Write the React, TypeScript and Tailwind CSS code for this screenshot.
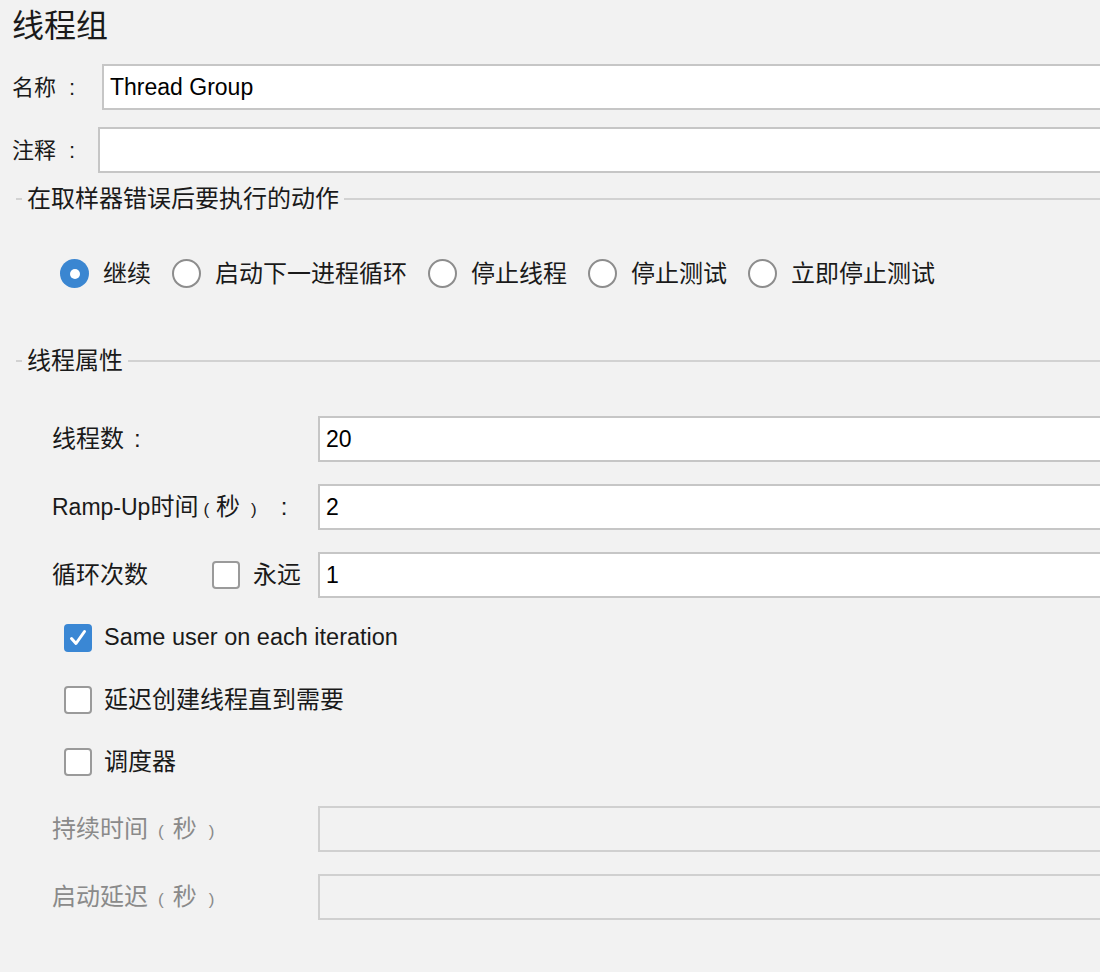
import React from "react";

const font = { fontFamily: '"Liberation Sans", "Noto Sans CJK SC", sans-serif' };

function SectionHeader({ title }: { title: string }) {
  return (
    <div className="flex items-center h-[52px] pl-[16px]">
      <div className="w-[6px] h-[2px] bg-[#d2d2d2]" />
      <span className="mx-[5px] text-[24px] text-[#1a1a1a] leading-none">{title}</span>
      <div className="flex-1 h-[2px] bg-[#d2d2d2]" />
    </div>
  );
}

function Radio({ checked, label }: { checked?: boolean; label: string }) {
  return (
    <div className="flex items-center mr-[21px]">
      {checked ? (
        <div className="w-[29px] h-[29px] rounded-full bg-[#3a86d1] flex items-center justify-center">
          <div className="w-[10px] h-[10px] rounded-full bg-white" />
        </div>
      ) : (
        <div className="w-[29px] h-[29px] rounded-full bg-white border-2 border-[#8d8d8d]" />
      )}
      <span className="ml-[14px] text-[24px] text-[#1a1a1a] leading-none">{label}</span>
    </div>
  );
}

function Checkbox({ checked }: { checked?: boolean }) {
  if (checked) {
    return (
      <div className="w-[28px] h-[28px] rounded-[4px] bg-[#3a87d4] flex items-center justify-center shrink-0">
        <svg width="20" height="20" viewBox="0 0 20 20">
          <path d="M3.5 10.5 L8 15.5 L16.5 3.5" fill="none" stroke="white" strokeWidth="3" strokeLinecap="round" strokeLinejoin="round" />
        </svg>
      </div>
    );
  }
  return <div className="w-[28px] h-[28px] rounded-[4px] bg-white border-2 border-[#9a9a9a] shrink-0" />;
}

function Field({ value, disabled }: { value?: string; disabled?: boolean }) {
  return (
    <div
      className={
        disabled
          ? "flex-1 h-[46px] bg-[#f2f2f2] border-2 border-r-0 border-[#d0d0d0]"
          : "flex-1 h-[46px] bg-white border-2 border-r-0 border-[#c6c6c6] flex items-center pl-[6px] text-[23px] text-black"
      }
    >
      {value}
    </div>
  );
}

// "（秒）" drawn the way the Swing label shows it: small parens, spaced out
function Seconds() {
  return (
    <>
      <span className="ml-[10px] text-[17px]">(</span>
      <span className="ml-[9px]">秒</span>
      <span className="ml-[12px] text-[17px]">)</span>
    </>
  );
}

export default function App() {
  return (
    <div className="w-full min-h-screen bg-[#f2f2f2] overflow-hidden text-[#1a1a1a]" style={font}>
      <div className="h-[52px] pl-[12px] flex items-center text-[32px] leading-none">线程组</div>

      <div className="mt-[12px] flex items-center pl-[12px] h-[46px]">
        <span className="w-[90px] text-[22px] flex items-baseline">
          名称<span className="ml-[13px]">:</span>
        </span>
        <Field value="Thread Group" />
      </div>
      <div className="mt-[17px] flex items-center pl-[12px] h-[46px]">
        <span className="w-[86px] text-[22px] flex items-baseline">
          注释<span className="ml-[13px]">:</span>
        </span>
        <Field />
      </div>

      <SectionHeader title="在取样器错误后要执行的动作" />

      <div className="mt-[34px] h-[29px] flex items-center pl-[60px]">
        <Radio checked label="继续" />
        <Radio label="启动下一进程循环" />
        <Radio label="停止线程" />
        <Radio label="停止测试" />
        <Radio label="立即停止测试" />
      </div>

      <div className="mt-[47px]">
        <SectionHeader title="线程属性" />
      </div>

      <div className="mt-[29px] flex items-center pl-[52px] h-[46px]">
        <span className="w-[266px] text-[24px] flex items-baseline">
          线程数<span className="ml-[10px]">:</span>
        </span>
        <Field value="20" />
      </div>
      <div className="mt-[22px] flex items-center pl-[52px] h-[46px]">
        <span className="w-[266px] text-[24px] flex items-baseline">
          <span className="text-[23px]">Ramp-Up</span>
          时间
          <span className="ml-[5px] text-[17px]">(</span>
          <span className="ml-[7px]">秒</span>
          <span className="ml-[11px] text-[17px]">)</span>
          <span className="ml-[24px]">:</span>
        </span>
        <Field value="2" />
      </div>
      <div className="mt-[22px] flex items-center pl-[52px] h-[46px]">
        <span className="w-[160px] text-[24px]">循环次数</span>
        <Checkbox />
        <span className="ml-[13px] w-[65px] text-[24px]">永远</span>
        <Field value="1" />
      </div>

      <div className="mt-[26px] flex items-center pl-[64px] h-[28px]">
        <Checkbox checked />
        <span className="ml-[12px] text-[23.5px]">Same user on each iteration</span>
      </div>
      <div className="mt-[34px] flex items-center pl-[64px] h-[28px]">
        <Checkbox />
        <span className="ml-[12px] text-[24px]">延迟创建线程直到需要</span>
      </div>
      <div className="mt-[34px] flex items-center pl-[64px] h-[28px]">
        <Checkbox />
        <span className="ml-[12px] text-[24px]">调度器</span>
      </div>

      <div className="mt-[30px] flex items-center pl-[52px] h-[46px]">
        <span className="w-[266px] text-[24px] text-[#8a8a8a] flex items-baseline">
          持续时间
          <Seconds />
        </span>
        <Field disabled />
      </div>
      <div className="mt-[22px] flex items-center pl-[52px] h-[46px]">
        <span className="w-[266px] text-[24px] text-[#8a8a8a] flex items-baseline">
          启动延迟
          <Seconds />
        </span>
        <Field disabled />
      </div>
    </div>
  );
}
